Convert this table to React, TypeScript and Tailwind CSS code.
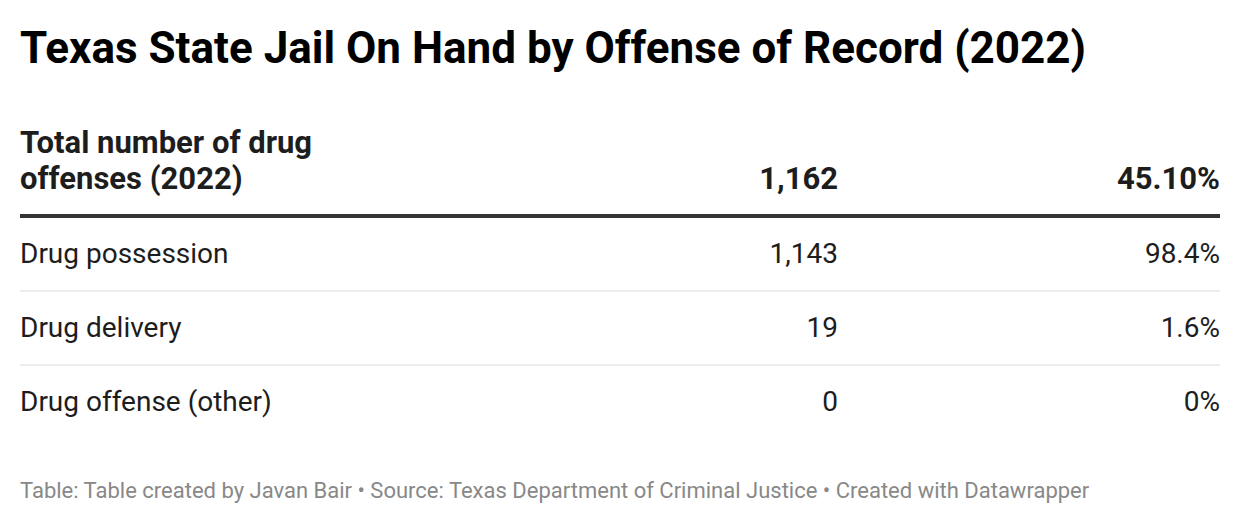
const rows = [
  { label: "Drug possession", count: "1,143", share: "98.4%" },
  { label: "Drug delivery", count: "19", share: "1.6%" },
  { label: "Drug offense (other)", count: "0", share: "0%" },
];

export default function App() {
  return (
    <div className="w-[1240px] h-[524px] bg-white px-5 font-['Roboto',sans-serif] text-[#1d1d1d]">
      <h1 className="pt-[22px] text-[44px] font-bold leading-[52px] text-black">
        Texas State Jail On Hand by Offense of Record (2022)
      </h1>

      <div className="mt-[51px]">
        <div className="grid grid-cols-[330px_488px_382px] items-end border-b-4 border-[#333333] pb-[17px] text-[31px] font-bold leading-[36px]">
          <div>Total number of drug offenses (2022)</div>
          <div className="text-right">1,162</div>
          <div className="text-right">45.10%</div>
        </div>

        {rows.map((r, i) => (
          <div
            key={r.label}
            className={
              "grid grid-cols-[330px_488px_382px] items-center text-[28px] " +
              (i < rows.length - 1 ? "h-[74px] border-b-2 border-[#ececec]" : "h-[72px]")
            }
          >
            <div className="whitespace-nowrap">{r.label}</div>
            <div className="text-right">{r.count}</div>
            <div className="text-right">{r.share}</div>
          </div>
        ))}
      </div>

      <div className="mt-[39px] text-[22px] leading-[28px] text-[#888888]">
        Table: Table created by Javan Bair • Source: Texas Department of Criminal Justice • Created with Datawrapper
      </div>
    </div>
  );
}
